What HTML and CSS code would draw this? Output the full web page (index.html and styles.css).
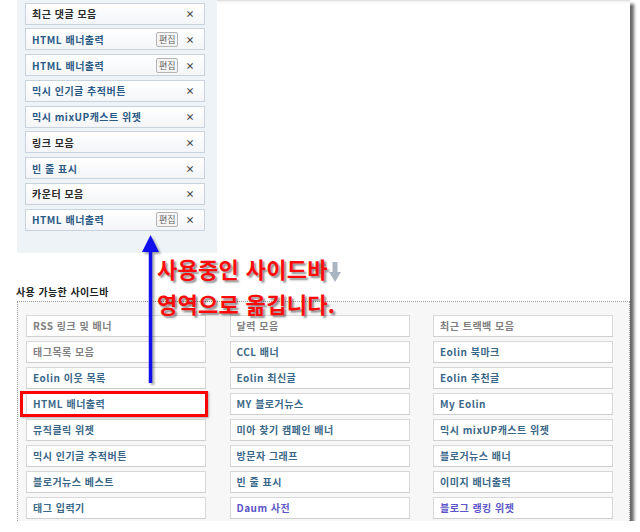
FILE: index.html
```html
<!DOCTYPE html>
<html lang="ko">
<head>
    <meta charset="UTF-8">
    <title>사이드바 관리</title>
    <link rel="stylesheet" href="styles.css">
</head>
<body>
    <div class="capture">
        <div class="top">
            <div class="using">
                <div class="widget black"><span class="name">최근 댓글 모음</span><span class="close">×</span></div>
                <div class="widget"><span class="name">HTML 배너출력</span><span class="edit">편집</span><span class="close">×</span></div>
                <div class="widget"><span class="name">HTML 배너출력</span><span class="edit">편집</span><span class="close">×</span></div>
                <div class="widget"><span class="name">믹시 인기글 추적버튼</span><span class="close">×</span></div>
                <div class="widget"><span class="name">믹시 mixUP캐스트 위젯</span><span class="close">×</span></div>
                <div class="widget black"><span class="name">링크 모음</span><span class="close">×</span></div>
                <div class="widget"><span class="name">빈 줄 표시</span><span class="close">×</span></div>
                <div class="widget black"><span class="name">카운터 모음</span><span class="close">×</span></div>
                <div class="widget"><span class="name">HTML 배너출력</span><span class="edit">편집</span><span class="close">×</span></div>
            </div>
            <div class="main-area"></div>
        </div>

        <div class="avail-title">사용 가능한 사이드바</div>
        <div class="avail">
            <div class="slot gray">RSS 링크 및 배너</div>
            <div class="slot gray">달력 모음</div>
            <div class="slot gray">최근 트랙백 모음</div>
            <div class="slot gray">태그목록 모음</div>
            <div class="slot">CCL 배너</div>
            <div class="slot">Eolin 북마크</div>
            <div class="slot">Eolin 이웃 목록</div>
            <div class="slot">Eolin 최신글</div>
            <div class="slot">Eolin 추천글</div>
            <div class="slot">HTML 배너출력</div>
            <div class="slot">MY 블로거뉴스</div>
            <div class="slot">My Eolin</div>
            <div class="slot">뮤직클릭 위젯</div>
            <div class="slot">미아 찾기 캠페인 배너</div>
            <div class="slot">믹시 mixUP캐스트 위젯</div>
            <div class="slot">믹시 인기글 추적버튼</div>
            <div class="slot">방문자 그래프</div>
            <div class="slot">블로거뉴스 배너</div>
            <div class="slot">블로거뉴스 베스트</div>
            <div class="slot">빈 줄 표시</div>
            <div class="slot">이미지 배너출력</div>
            <div class="slot">태그 입력기</div>
            <div class="slot purple">Daum 사전</div>
            <div class="slot purple">블로그 랭킹 위젯</div>
        </div>

        <!-- annotations drawn over the capture -->
        <svg class="move-icon" width="36" height="28" viewBox="0 0 36 28">
            <polygon points="4,10 10,2 16,10 12.5,10 12.5,18 7.5,18 7.5,10" fill="#c8d3dc"/>
            <polygon points="18,16 24,26 30,16 26.5,16 26.5,6 21.5,6 21.5,16" fill="#a9b6c2"/>
        </svg>
        <div class="note">사용중인 사이드바<br>영역으로 옮깁니다.</div>
        <svg class="arrow" width="24" height="154" viewBox="0 0 24 154">
            <line x1="10.5" y1="14" x2="10.5" y2="149" stroke="#1010ee" stroke-width="3.5"/>
            <polygon points="2,18 10.5,1 19,18" fill="#1010ee"/>
        </svg>
        <div class="highlight"></div>
    </div>
</body>
</html>
```

FILE: styles.css
```css
* {
    margin: 0;
    padding: 0;
    box-sizing: border-box;
}

body {
    background: #fff;
    font-family: "Noto Sans CJK KR", "Noto Sans", sans-serif;
}

.capture {
    position: relative;
    width: 630px;
    height: 521px;
    background: #fff;
    box-shadow: 4px 4px 3px rgba(0, 0, 0, 0.6);
    overflow: hidden;
}

.top {
    display: flex;
    height: 253px;
}

.using {
    width: 200px;
    margin-left: 17px;
    background: #eef3f8;
    padding: 2.5px 0 0 8px;
    display: flex;
    flex-direction: column;
    gap: 3.75px;
}

.main-area {
    flex: 1;
    border-top: 1px solid #e2e2e2;
    box-shadow: inset 0 3px 3px -2px rgba(0, 0, 0, 0.08);
}

.widget {
    width: 180px;
    height: 22px;
    border: 1px solid #c9d3de;
    background: linear-gradient(#fff, #f3f5f8);
    display: flex;
    align-items: center;
    padding: 0 9px 0 6px;
    font-size: 10px;
    font-weight: bold;
    letter-spacing: 0.5px;
    color: #2b5a85;
}

.widget.black {
    color: #2a2a2a;
}

.widget .name {
    flex: 1;
    white-space: nowrap;
}

.edit {
    height: 15px;
    line-height: 13px;
    padding: 0 2px;
    margin-right: 7px;
    border: 1px solid #b5b5b5;
    border-radius: 2px;
    background: #f4f4f4;
    color: #666;
    font-size: 9px;
    font-weight: normal;
    letter-spacing: 0;
}

.close {
    color: #444;
    font-size: 9px;
    font-weight: bold;
}

.avail-title {
    height: 48px;
    padding: 31px 0 0 16px;
    font-size: 10px;
    font-weight: bold;
    letter-spacing: 0.4px;
    color: #222;
}

.avail {
    height: 220px;
    margin-left: 17px;
    border-top: 1px dotted #9a9a9a;
    border-left: 1px dotted #9a9a9a;
    border-right: 1px dotted #9a9a9a;
    background: #f7f7f7;
    padding: 13px 0 0 8px;
    display: grid;
    grid-template-columns: repeat(3, 180px);
    column-gap: 23.5px;
    row-gap: 4px;
    align-content: start;
}

.slot {
    height: 22px;
    border: 1px solid #d8d8d8;
    border-bottom-color: #cfcfcf;
    background: #fff;
    padding-left: 6px;
    line-height: 20px;
    font-size: 10px;
    font-weight: bold;
    letter-spacing: 0.5px;
    color: #3a6788;
    white-space: nowrap;
}

.slot.gray {
    color: #808080;
}

.slot.purple {
    color: #5a55c8;
}

.move-icon {
    position: absolute;
    left: 311px;
    top: 256px;
}

.note {
    position: absolute;
    left: 157px;
    top: 251px;
    font-size: 22px;
    font-weight: bold;
    letter-spacing: 0.3px;
    line-height: 35px;
    color: #ff0a0a;
    text-shadow: 2px 2px 2px rgba(0, 0, 0, 0.45);
    white-space: nowrap;
}

.arrow {
    position: absolute;
    left: 140px;
    top: 234px;
    filter: drop-shadow(2px 2px 1px rgba(0, 0, 0, 0.35));
}

.highlight {
    position: absolute;
    left: 20px;
    top: 391px;
    width: 188px;
    height: 26px;
    border: 3px solid #f00;
    box-shadow: 1px 1px 2px rgba(0, 0, 0, 0.3);
}
```
